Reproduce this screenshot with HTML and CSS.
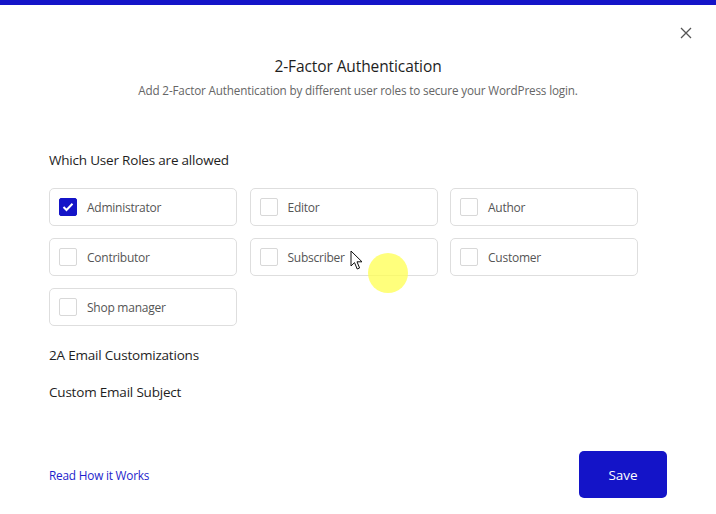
FILE: index.html
```html
<!DOCTYPE html>
<html>
<head>
<meta charset="utf-8">
<link rel="stylesheet" href="styles.css">
</head>
<body>
<div class="topbar"></div>
<div class="modal">
  <div class="close-row">
    <button class="close" aria-label="Close">
      <svg width="12" height="12" viewBox="0 0 12 12"><path d="M1 1 L11 11 M11 1 L1 11" stroke="#555" stroke-width="1.3" fill="none"/></svg>
    </button>
  </div>
  <h1 class="title">2-Factor Authentication</h1>
  <p class="subtitle">Add 2-Factor Authentication by different user roles to secure your WordPress login.</p>

  <div class="section-label roles-label">Which User Roles are allowed</div>
  <div class="roles">
    <label class="role"><span class="cb checked"><svg width="12" height="10" viewBox="0 0 12 10"><path d="M1.5 5 L4.5 8 L10.5 1.8" stroke="#fff" stroke-width="2" fill="none"/></svg></span><span class="role-name">Administrator</span></label>
    <label class="role"><span class="cb"></span><span class="role-name">Editor</span></label>
    <label class="role"><span class="cb"></span><span class="role-name">Author</span></label>
    <label class="role"><span class="cb"></span><span class="role-name">Contributor</span></label>
    <label class="role"><span class="cb"></span><span class="role-name">Subscriber</span></label>
    <label class="role"><span class="cb"></span><span class="role-name">Customer</span></label>
    <label class="role"><span class="cb"></span><span class="role-name">Shop manager</span></label>
  </div>

  <div class="section-label email">2A Email Customizations</div>
  <div class="section-label subject">Custom Email Subject</div>

  <div class="footer">
    <a class="link" href="#">Read How it Works</a>
    <button class="save">Save</button>
  </div>
</div>
<div class="click-dot"></div>
<svg class="cursor" width="14" height="21" viewBox="0 0 14 21"><path d="M1 1 L1 16 L4.5 12.6 L7.2 19 L9.6 18 L7 11.8 L12 11.8 Z" fill="#fff" stroke="#111" stroke-width="1"/></svg>
</body>
</html>
```
FILE: styles.css
```css
* { box-sizing: border-box; }
html, body { margin: 0; padding: 0; background: #fff; }
body {
  width: 716px; height: 514px; overflow: hidden; position: relative;
  font-family: "Open Sans", "Noto Sans", sans-serif;
  color: #222;
}
.topbar { height: 5px; background: #1414c8; }
.modal { padding: 0 49px 0 49px; }
.close-row { display: flex; justify-content: flex-end; padding-top: 22px; margin-right: -25px; }
.close { background: none; border: 0; padding: 0; width: 12px; height: 12px; display: flex; cursor: pointer; }
.title {
  margin: 16px 0 0; text-align: center; font-weight: 400; font-size: 15.5px; line-height: 22px; color: #1e1e1e; letter-spacing: -0.1px;
}
.subtitle {
  margin: 5px 0 0; text-align: center; font-size: 11.7px; line-height: 16px; color: #666; letter-spacing: -0.15px;
}
.section-label { font-size: 13.5px; line-height: 18px; color: #1e1e1e; letter-spacing: -0.2px; }
.roles-label { margin-top: 53px; }
.roles {
  margin-top: 19px;
  display: grid; grid-template-columns: 188px 188px 188px; column-gap: 12.5px; row-gap: 12px;
  width: 589px;
}
.role {
  height: 38px; border: 1px solid #dedede; border-radius: 5px;
  display: flex; align-items: center; padding-left: 9px; cursor: pointer;
}
.cb {
  width: 18px; height: 18px; border: 1px solid #d8d8d8; border-radius: 2px; background: #fff;
  display: flex; align-items: center; justify-content: center; flex: none;
}
.cb.checked { background: #1414c8; border-color: #1414c8; }
.role-name { margin-left: 10px; font-size: 12px; color: #555; letter-spacing: -0.25px; }
.email { margin-top: 20px; }
.subject { margin-top: 19px; }
.footer { margin-top: 50px; display: flex; justify-content: space-between; align-items: center; width: 618px; }
.link { font-size: 11.8px; color: #1e1ecc; text-decoration: none; letter-spacing: -0.2px; }
.save {
  width: 88px; height: 47px; border: 0; border-radius: 5px; background: #1414c8; color: #fff;
  font-family: inherit; font-size: 13.5px; cursor: pointer;
}
.click-dot {
  position: absolute; left: 368px; top: 253px; width: 40px; height: 40px; border-radius: 50%;
  background: rgba(255, 255, 80, 0.75);
}
.cursor { position: absolute; left: 350px; top: 250px; }
```
